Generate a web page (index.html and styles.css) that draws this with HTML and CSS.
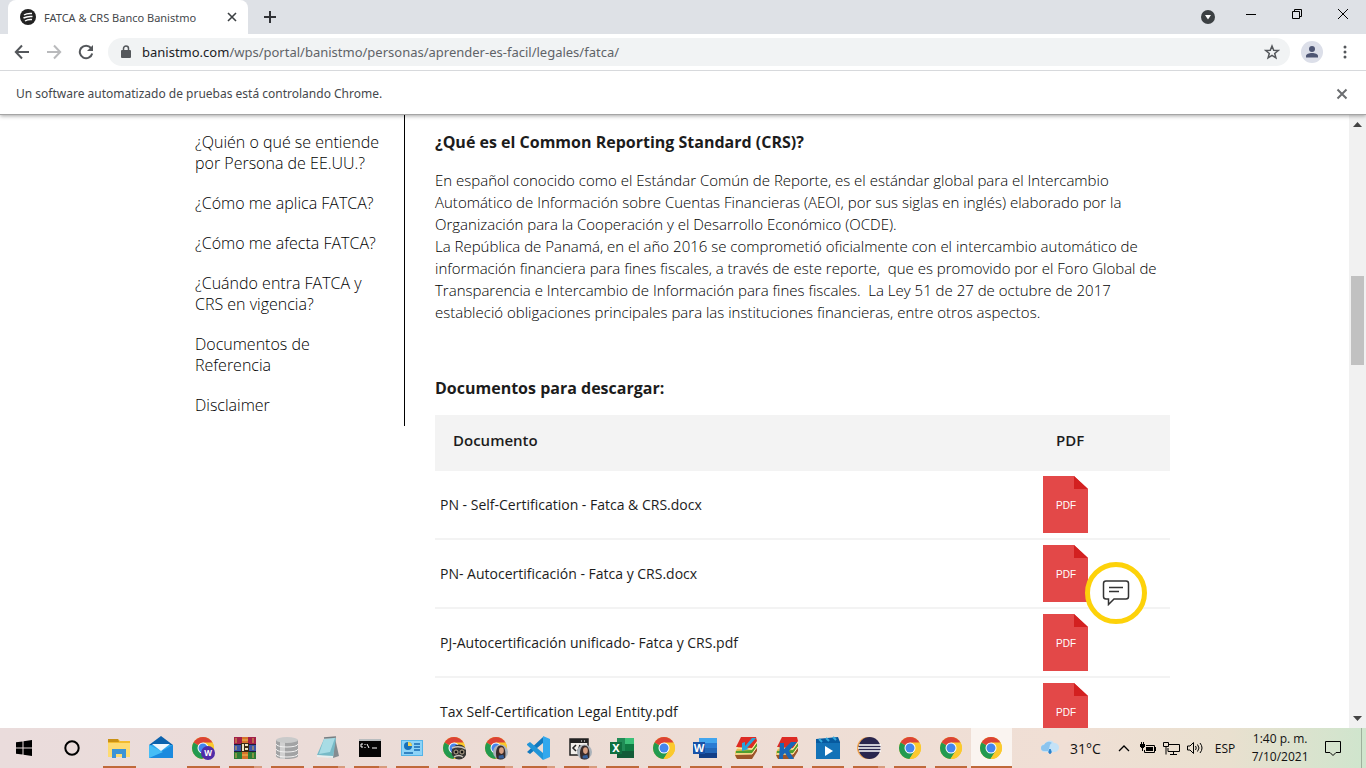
FILE: index.html
```html
<!DOCTYPE html>
<html lang="es">
<head>
<meta charset="utf-8">
<title>FATCA &amp; CRS Banco Banistmo</title>
<link rel="stylesheet" href="styles.css">
</head>
<body>
<svg class="defs" aria-hidden="true">
  <symbol id="chrome" viewBox="0 0 24 24">
    <circle cx="12" cy="12" r="11" fill="#fbc92d"/>
    <path d="M12 12 2.500 6.500A11 11 0 0 1 21.500 6.500z" fill="#dc4335"/>
    <path d="M2.500 6.500A11 11 0 0 0 11.500 23L16.800 14.800 12 12z" fill="#229a50"/>
    <path d="M12 6.500h9.500A11 11 0 0 1 11.500 23l5.300-8.300z" fill="#fbc92d"/>
    <circle cx="12" cy="12" r="5.500" fill="#fff"/>
    <circle cx="12" cy="12" r="4.500" fill="#4486ee"/>
  </symbol>
  <symbol id="face" viewBox="0 0 16 16">
    <circle cx="8" cy="8" r="8" fill="#aab2ba"/>
    <path d="M4 15C2 8 4 1 8 1s6 5 5 13a8 8 0 0 1-9 1z" fill="#382b2a"/>
    <ellipse cx="9" cy="6.500" rx="2.500" ry="3.500" fill="#d9a184"/>
    <path d="M6 12l5-1 1 4H6z" fill="#35609b"/>
  </symbol>
  <symbol id="pdf" viewBox="0 0 45 57">
    <path d="M0 0h31l14 13v44H0z" fill="#e34848"/>
    <path d="M31 0l14 13H31z" fill="#d32020"/>
    <text x="23" y="33" text-anchor="middle" class="pdf-label">PDF</text>
  </symbol>
  <symbol id="books" viewBox="0 0 24 24">
    <path d="M1 16 6 8l17-2v8l-5 8H2z" fill="#e9be54"/>
    <path d="M1 19l17-1 5-7v4l-5 8H3z" fill="#9c552a"/>
    <path d="M2 15l16-1 5-7v3l-5 7H2z" fill="#4f9f30"/>
    <path d="M2 11 7 1h15l1 4-5 7z" fill="#dd2b24"/>
    <path d="M2 12l16 1 5-7M2 18h16l5-7" fill="none" stroke="#fff0b4"/>
  </symbol>
</svg>

<header class="browser">
  <div class="tabstrip">
    <div class="tab">
      <svg class="favicon" viewBox="0 0 16 16"><circle cx="8" cy="8" r="8" fill="#222"/><path d="M4 6q3-2 8-1.500M3.500 9q4-2 9-1.500M5 12q3-2 7-1.500" fill="none" stroke="#fff" stroke-width="1.500"/></svg>
      <span class="tab-title">FATCA &amp; CRS Banco Banistmo</span>
      <button class="icon-btn tab-close" aria-label="Cerrar pestaña"><svg width="10" height="10" viewBox="0 0 10 10"><path d="M1 1l8 8M9 1 1 9" stroke="#3c4043" stroke-width="1.600"/></svg></button>
    </div>
    <button class="icon-btn new-tab" aria-label="Nueva pestaña"><svg width="14" height="14" viewBox="0 0 14 14"><path d="M7 1v12M1 7h12" stroke="#303236" stroke-width="2"/></svg></button>
    <button class="icon-btn tab-search" aria-label="Buscar pestañas"><svg width="14" height="14" viewBox="0 0 14 14"><circle cx="7" cy="7" r="7" fill="#3c4043"/><path d="M4 5h6l-3 4.500z" fill="#fff"/></svg></button>
    <div class="window-controls">
      <button class="icon-btn" aria-label="Minimizar"><svg width="12" height="12" viewBox="0 0 12 12"><path d="M1 6.500h10" stroke="#000"/></svg></button>
      <button class="icon-btn" aria-label="Restaurar"><svg width="12" height="12" viewBox="0 0 12 12"><path d="M1.500 3.500h7v7h-7zM3.500 3V1.500h7v7H9" fill="none" stroke="#000"/></svg></button>
      <button class="icon-btn" aria-label="Cerrar"><svg width="12" height="12" viewBox="0 0 12 12"><path d="M1 1l10 10M11 1 1 11" stroke="#000"/></svg></button>
    </div>
  </div>
  <div class="toolbar">
    <button class="icon-btn nav" aria-label="Atrás"><svg width="16" height="16" viewBox="0 0 16 16"><path d="M15 8H2M8 1.500 1.800 8 8 14.500" fill="none" stroke="#54575b" stroke-width="2"/></svg></button>
    <button class="icon-btn nav" aria-label="Adelante"><svg width="16" height="16" viewBox="0 0 16 16"><path d="M1 8h13M8 1.500 14.200 8 8 14.500" fill="none" stroke="#b9babc" stroke-width="2"/></svg></button>
    <button class="icon-btn nav" aria-label="Volver a cargar"><svg width="16" height="16" viewBox="0 0 16 16"><path d="M13 4A6.300 6.300 0 1 0 14.200 9.500" fill="none" stroke="#54575b" stroke-width="2"/><path d="M15 1v6H9z" fill="#54575b"/></svg></button>
    <div class="omnibox">
      <svg width="10" height="14" viewBox="0 0 10 14"><path d="M2.500 6V3.500a2.500 2.500 0 0 1 5 0V6" fill="none" stroke="#54575b" stroke-width="1.500"/><rect y="5" width="10" height="8" rx="1" fill="#54575b"/></svg>
      <a class="url" href="#"><span class="host">banistmo.com</span>/wps/portal/banistmo/personas/aprender-es-facil/legales/fatca/</a>
      <button class="icon-btn" aria-label="Añadir a marcadores"><svg width="16" height="16" viewBox="0 0 16 16"><path d="M8 2l1.700 4.200 4.500.3-3.500 2.900 1.200 4.500L8 11.400l-3.900 2.500 1.200-4.500L1.800 6.500l4.500-.3z" fill="none" stroke="#54575b" stroke-width="1.500"/></svg></button>
    </div>
    <button class="icon-btn avatar" aria-label="Perfil"><svg width="22" height="22" viewBox="0 0 22 22"><circle cx="11" cy="11" r="11" fill="#dcdfe9"/><circle cx="11" cy="8" r="3" fill="#4d5573"/><path d="M5 16.500V15c0-2 3-3 6-3s6 1 6 3v1.500z" fill="#4d5573"/></svg></button>
    <button class="icon-btn menu" aria-label="Menú"><svg width="4" height="14" viewBox="0 0 4 14" fill="#54575b"><circle cx="2" cy="2" r="1.500"/><circle cx="2" cy="7" r="1.500"/><circle cx="2" cy="12" r="1.500"/></svg></button>
  </div>
  <div class="infobar">
    <span>Un software automatizado de pruebas está controlando Chrome.</span>
    <button class="icon-btn" aria-label="Cerrar aviso"><svg width="12" height="12" viewBox="0 0 12 12"><path d="M1.500 1.500l9 9M10.500 1.500l-9 9" stroke="#6b6d70" stroke-width="2"/></svg></button>
  </div>
</header>

<div class="viewport">
  <div class="page">
    <div class="container">
      <nav class="side">
        <a href="#">¿Quién o qué se entiende por Persona de EE.UU.?</a>
        <a href="#">¿Cómo me aplica FATCA?</a>
        <a href="#">¿Cómo me afecta FATCA?</a>
        <a href="#">¿Cuándo entra FATCA y CRS en vigencia?</a>
        <a href="#">Documentos de Referencia</a>
        <a href="#">Disclaimer</a>
      </nav>
      <main class="content">
        <h2>¿Qué es el Common Reporting Standard (CRS)?</h2>
        <p>En español conocido como el Estándar Común de Reporte, es el estándar global para el Intercambio Automático de Información sobre Cuentas Financieras (AEOI, por sus siglas en inglés) elaborado por la Organización para la Cooperación y el Desarrollo Económico (OCDE).<br>La República de Panamá, en el año 2016 se comprometió oficialmente con el intercambio automático de información financiera para fines fiscales, a través de este reporte,&nbsp; que es promovido por el Foro Global de Transparencia e Intercambio de Información para fines fiscales.&nbsp; La Ley 51 de 27 de octubre de 2017 estableció obligaciones principales para las instituciones financieras, entre otros aspectos.</p>
        <h2>Documentos para descargar:</h2>
        <table class="docs">
          <thead><tr><th>Documento</th><th class="col-pdf">PDF</th></tr></thead>
          <tbody>
            <tr><td>PN - Self-Certification - Fatca &amp; CRS.docx</td><td><a href="#" aria-label="Descargar"><svg class="pdf"><use href="#pdf"/></svg></a></td></tr>
            <tr><td>PN- Autocertificación - Fatca y CRS.docx</td><td><a href="#" aria-label="Descargar"><svg class="pdf"><use href="#pdf"/></svg></a></td></tr>
            <tr><td>PJ-Autocertificación unificado- Fatca y CRS.pdf</td><td><a href="#" aria-label="Descargar"><svg class="pdf"><use href="#pdf"/></svg></a></td></tr>
            <tr><td>Tax Self-Certification Legal Entity.pdf</td><td><a href="#" aria-label="Descargar"><svg class="pdf"><use href="#pdf"/></svg></a></td></tr>
          </tbody>
        </table>
      </main>
    </div>
    <button class="chat" aria-label="Chat"><svg width="28" height="26" viewBox="0 0 28 26" fill="none" stroke="#333" stroke-width="1.500"><path d="M4 1h20q2.500 0 2.500 2.500v13q0 2.500-2.500 2.500H12l-5.500 5.500V19H4q-2.500 0-2.500-2.500v-13Q1.500 1 4 1z"/><path d="M7 7.500h14M7 11.500h10"/></svg></button>
  </div>
  <div class="scrollbar">
    <svg width="9" height="5" viewBox="0 0 9 5"><path d="M0 5l4.500-5L9 5z" fill="#444"/></svg>
    <div class="track"><div class="thumb"></div></div>
    <svg width="9" height="5" viewBox="0 0 9 5"><path d="M0 0h9L4.500 5z" fill="#444"/></svg>
  </div>
</div>

<footer class="taskbar">
  <button class="task-btn" aria-label="Inicio"><svg width="16" height="16" viewBox="0 0 16 16"><path d="M0 2.300 6.500 1.400v6.100H0zM7.500 1.200 16 0v7.500H7.500zM0 8.500h6.500v6.100L0 13.700zM7.500 8.500H16V16l-8.500-1.200z"/></svg></button>
  <button class="task-btn" aria-label="Cortana"><svg width="16" height="16" viewBox="0 0 16 16"><circle cx="8" cy="8" r="6.700" fill="none" stroke="#000" stroke-width="2"/></svg></button>
  <div class="apps">
    <button class="app open" aria-label="Explorador"><svg viewBox="0 0 24 24"><path d="M1 3h10l2 2h10v15H1z" fill="#f3bb2e"/><path d="M1 3h10l1 3H1z" fill="#c99014"/><path d="M1 7h22v14H1z" fill="#fedb72"/><path d="M5 13h14v9h-4v-4H9v4H5z" fill="#3b93d6"/></svg></button>
    <button class="app" aria-label="Correo"><svg viewBox="0 0 24 24"><path d="M0 9 12 0l12 9z" fill="#0b62ad"/><path d="M0 9h24v13H0z" fill="#2da8ee"/><path d="M0 22l24-13v13z" fill="#1b8ade"/><path d="M0 9v13l14-6z" fill="#46bdf6"/><path d="M3 8h18L12 15z" fill="#eef7fd"/></svg></button>
    <button class="app open" aria-label="Chrome W"><svg viewBox="0 0 24 24"><use href="#chrome"/><circle cx="17" cy="17" r="7" fill="#512da8"/><text x="17" y="20" text-anchor="middle" class="badge-text">W</text></svg></button>
    <button class="app open multi" aria-label="WinRAR"><svg viewBox="0 0 24 24"><path d="M1 1h22v8H1z" fill="#a32049"/><path d="M1 9h22v7H1z" fill="#3c54a8"/><path d="M1 16h22v7H1z" fill="#2c7d38"/><path d="M1 8.500h22M1 15.500h22" stroke="#211b39"/><path d="M3 2v5M20 2v5M3 10v4M20 10v4M3 17v5M20 17v5" stroke="#d7ad4c"/><path d="M9 1h6v22H9z" fill="#d6742b"/><path d="M8 7h8v9H8z" fill="#3a2a16"/><path d="M9 8h2v7H9zM12 8h3v2h-3zM12 12h3v2h-3z" fill="#f0e5c3"/><path d="M9 4h6M9 19h6" stroke="#edc355"/></svg></button>
    <button class="app open" aria-label="Base de datos"><svg viewBox="0 0 24 24"><path d="M1 4v16c0 4 22 4 22 0V4z" fill="#a2a3a4"/><path d="M5 6v17h5V6z" fill="#d0d0d0"/><path d="M1 8c0 4 22 4 22 0M1 13c0 4 22 4 22 0M1 18c0 4 22 4 22 0" fill="none" stroke="#f1f1f1"/><ellipse cx="12" cy="4" rx="11" ry="3" fill="#c9caca"/></svg></button>
    <button class="app open multi" aria-label="Bloc de notas"><svg viewBox="0 0 24 24"><path d="M19 2l4 18-6 2z" fill="#858c90"/><path d="M8 3l12-1-3 20-16-3z" fill="#77bac7"/><path d="M8 3l11-1-5 14-11 2z" fill="#a8dce5"/><path d="M1 19l16 1v2L1 21z" fill="#e8eeee"/><path d="M8 2l12-1" stroke="#767e82" stroke-width="1.500"/></svg></button>
    <button class="app open multi" aria-label="Símbolo del sistema"><svg viewBox="0 0 24 24"><path d="M1 3h22v18H1z" fill="#050505"/><path d="M1 3h22v2H1z" fill="#b9bdbf"/><path d="M5 8H3v3h2M7 8v1M7 11v1M9 8l2 4M14 12h5" fill="none" stroke="#fff"/></svg></button>
    <button class="app open" aria-label="Panel de control"><svg viewBox="0 0 24 24"><path d="M1 4h22v16H1z" fill="#54b4e8"/><path d="M2 5h20v14H2z" fill="#8dd3f7"/><circle cx="8" cy="10" r="4" fill="#176fb9"/><path d="M8 10V6a4 4 0 0 1 4 4z" fill="#f3d252"/><path d="M14 8h6M14 11h6M14 14h6M4 17h9" stroke="#166ab1" stroke-width="1.500"/></svg></button>
    <button class="app open" aria-label="Chrome perfil"><svg viewBox="0 0 24 24"><use href="#chrome"/><circle cx="17" cy="16" r="7.500" fill="#383735"/><path d="M10 12q7-3 14 1M12 21q5-3 9 0" fill="none" stroke="#c9c4bc" stroke-width="1.500"/><circle cx="14" cy="16" r="2" fill="#111" stroke="#b7a990"/><circle cx="20" cy="16" r="2" fill="#111" stroke="#b7a990"/></svg></button>
    <button class="app open multi" aria-label="Chrome personal"><svg viewBox="0 0 24 24"><use href="#chrome"/><use href="#face" x="9" y="8" width="15" height="16"/></svg></button>
    <button class="app open multi" aria-label="Visual Studio Code"><svg viewBox="0 0 24 24"><path d="M17 0v7L4 18l-3-2L17 1z" fill="#1279be"/><path d="M1 8l3-2 13 11v7L1 9z" fill="#2195d7"/><path d="M17 0l7 3v18l-7 3z" fill="#32a8ed"/></svg></button>
    <button class="app open multi" aria-label="Herramientas"><svg viewBox="0 0 24 24"><path d="M2 3h18v16H2z" fill="#f1eeea" stroke="#222" stroke-width="1.500"/><path d="M2 3h18v4H2z" fill="#222"/><path d="M13 5h1M16 5h1" stroke="#fff"/><path d="M8 9l-3 3 3 3M12 9l-2 6" fill="none" stroke="#222" stroke-width="1.500"/><use href="#face" x="9" y="8" width="15" height="16"/></svg></button>
    <button class="app open" aria-label="Excel"><svg viewBox="0 0 24 24"><path d="M7 2h17v20H7z" fill="#218c57"/><path d="M15 2h9v6h-9z" fill="#3bc078"/><path d="M7 15h17v7H7z" fill="#135c38"/><path d="M15 8h9v7h-9z" fill="#107b43"/><path d="M0 6h12v12H0z" fill="#107140"/><text x="6" y="16" text-anchor="middle" class="office-text">X</text></svg></button>
    <button class="app open" aria-label="Chrome"><svg><use href="#chrome"/></svg></button>
    <button class="app open" aria-label="Word"><svg viewBox="0 0 24 24"><path d="M6 2h18v20H6z" fill="#2367b8"/><path d="M6 2h18v5H6z" fill="#42a5ee"/><path d="M6 7h18v5H6z" fill="#2b7cd3"/><path d="M6 17h18v5H6z" fill="#123f87"/><path d="M0 6h12v12H0z" fill="#1852a7"/><text x="6" y="16" text-anchor="middle" class="office-text">W</text></svg></button>
    <button class="app open" aria-label="Libros"><svg viewBox="0 0 24 24"><use href="#books"/><path d="M18 2 11 10V6L8 7v8l7-2-2-1 9-10z" fill="#27a3da"/></svg></button>
    <button class="app open" aria-label="Biblioteca"><svg viewBox="0 0 24 24"><use href="#books"/><path d="M5 7h4v6l7-7h6l-8 9 5 8h-5l-4-6-2 2v4H4z" fill="#1a67b7"/></svg></button>
    <button class="app open" aria-label="Películas"><svg viewBox="0 0 24 24"><path d="M0 3l22-2 2 5v17H0z" fill="#075a9f"/><path d="M3 3l3 3M10 2l3 3M17 1l3 3" stroke="#35aadd" stroke-width="2"/><path d="M0 7h24v16H0z" fill="#1372b7"/><path d="M9 10v10l8-5z" fill="#fff"/></svg></button>
    <button class="app open multi" aria-label="Eclipse"><svg viewBox="0 0 24 24"><circle cx="11" cy="12" r="11" fill="#f0a451"/><circle cx="12.500" cy="12" r="11" fill="#29264e"/><path d="M2 9h22M1 12h23M2 15h22" stroke="#fff" stroke-width="1.300"/></svg></button>
    <button class="app open" aria-label="Chrome 2"><svg><use href="#chrome"/></svg></button>
    <button class="app open" aria-label="Chrome 3"><svg><use href="#chrome"/></svg></button>
    <button class="app open active" aria-label="Chrome 4"><svg><use href="#chrome"/></svg></button>
  </div>
  <div class="tray">
    <svg width="20" height="18" viewBox="0 0 20 18"><path d="M5 13a4 4 0 0 1 0-8 5 5 0 0 1 9-1 4.500 4.500 0 1 1 1 9z" fill="#c4e2f7"/><path d="M4 12a3 3 0 0 1 0-6 5 5 0 0 1 8-2c-3 1-2 5-4 8z" fill="#8cc4ee"/><path d="M10 10c-4 6 4 6 0 0z" fill="#2982ce" stroke="#2982ce"/></svg>
    <span class="temp">31°C</span>
    <svg class="chevron" width="12" height="8" viewBox="0 0 12 8"><path d="M1 7l5-5 5 5" fill="none" stroke="#000" stroke-width="1.300"/></svg>
    <svg width="16" height="14" viewBox="0 0 16 14"><path d="M6 4.500h8.500v7h-10V9" fill="none" stroke="#000"/><path d="M6 6h7v4H6zM15 6h1v4h-1zM0 3h5v3H4v1H1V6H0z"/><path d="M1.500 1v2M3.500 1v2M2.500 7v3" stroke="#000"/></svg>
    <svg width="17" height="14" viewBox="0 0 17 14"><path d="M6 3.500h10.500v7H5V7M.5 1.500h5v4h-5zM3 6v7.500M7 13.500h7M10.500 11v2" fill="none" stroke="#000"/></svg>
    <svg width="17" height="14" viewBox="0 0 17 14"><path d="M.5 5v4H3l3.500 3.500v-11L3 5zM8.500 5q1.500 2 0 4M10.500 3.500q3 3.500 0 7M13 2q4 5 0 10" fill="none" stroke="#000"/></svg>
    <span class="lang">ESP</span>
    <time class="clock">1:40 p. m.<br>7/10/2021</time>
    <svg class="notices" width="17" height="17" viewBox="0 0 17 17"><path d="M.5 1.500h15v11H11L8 15.500l-3-3H.5z" fill="none" stroke="#000"/></svg>
  </div>
  <button class="show-desktop" aria-label="Mostrar escritorio"></button>
</footer>
</body>
</html>
```
FILE: styles.css
```css
* { box-sizing: border-box; }
body {
  margin: 0;
  height: 100vh;
  display: flex;
  flex-direction: column;
  overflow: hidden;
  background: #fff;
  color: #1c1c1c;
  font-family: "Open Sans", "Noto Sans", sans-serif;
}
button { font: inherit; color: inherit; border: 0; padding: 0; background: none; }
a { color: inherit; text-decoration: none; }
svg { display: block; flex: none; }
.defs { position: absolute; width: 0; height: 0; }
.icon-btn { display: flex; align-items: center; justify-content: center; flex: none; }

.browser {
  position: relative;
  z-index: 2;
  background: #fff;
  border-bottom: 1px solid #a5a5a5;
  box-shadow: 0 1px 4px rgba(0, 0, 0, .35);
}
.tabstrip { display: flex; height: 34px; padding-left: 8px; background: #dee1e6; }
.tab {
  display: flex;
  align-items: center;
  width: 240px;
  padding: 0 10px 0 12px;
  background: #fff;
  border-radius: 8px 8px 0 0;
}
.favicon { width: 16px; height: 16px; }
.tab-title {
  flex: 1;
  margin-left: 8px;
  font-family: "Noto Sans", sans-serif;
  font-size: 11px;
  white-space: nowrap;
  color: #45484c;
}
.tab-close { width: 12px; }
.new-tab { width: 44px; }
.tab-search { width: 40px; margin-left: auto; }
.window-controls { display: flex; }
.window-controls .icon-btn { width: 46px; height: 28px; }
.toolbar {
  display: flex;
  align-items: center;
  height: 37px;
  padding: 0 11px 0 6px;
  border-bottom: 1px solid #d7d9dc;
}
.nav { width: 32px; }
.omnibox {
  display: flex;
  align-items: center;
  flex: 1;
  height: 28px;
  margin-left: 6px;
  padding: 0 10px 0 13px;
  border-radius: 14px;
  background: #f1f3f4;
  font-family: "Noto Sans", sans-serif;
  font-size: 13px;
}
.url { flex: 1; margin-left: 11px; color: #5f6368; white-space: nowrap; }
.host { color: #202124; }
.avatar { margin-left: 11px; }
.menu { width: 20px; margin-left: 12px; }
.infobar {
  display: flex;
  align-items: center;
  justify-content: space-between;
  height: 43px;
  padding: 2px 18px 0 16px;
  font-family: "Noto Sans", sans-serif;
  font-size: 12px;
  color: #45484c;
}

.viewport { display: flex; flex: 1; min-height: 0; }
.page { position: relative; flex: 1; overflow: hidden; }
.container {
  display: grid;
  grid-template-columns: 210px 1fr;
  align-items: start;
  gap: 30px;
  max-width: 1169px;
  margin: 0 auto;
  padding: 0 89px 0 105px;
}
.side {
  display: flex;
  flex-direction: column;
  gap: 19px;
  padding: 17px 20px 10px 0;
  border-right: 1px solid #000;
  font-size: 16px;
  font-weight: 300;
  line-height: 21px;
  color: #000;
}
.content h2 { margin: 0; padding-top: 16px; font-size: 16px; font-weight: 700; line-height: 22px; }
.content p { margin: 16px 0 38px; font-size: 15px; font-weight: 300; line-height: 22px; color: #000; }
.docs { width: 100%; margin-top: 16px; border-collapse: collapse; table-layout: fixed; }
.docs th {
  height: 56px;
  padding: 0 18px 6px;
  background: #f3f3f3;
  font-size: 15px;
  font-weight: 600;
  text-align: left;
}
.docs .col-pdf { width: 132px; }
.docs td { padding: 5px; border-bottom: 2px solid #f3f3f3; font-size: 14px; font-weight: 500; }
.pdf { width: 45px; height: 57px; }
.pdf-label { font: 10px "Liberation Sans", sans-serif; fill: #fff; }
.chat {
  position: absolute;
  right: 202px;
  bottom: 104px;
  display: flex;
  align-items: center;
  justify-content: center;
  width: 62px;
  height: 62px;
  border: 5px solid #fdd20a;
  border-radius: 50%;
  background: #fff;
}
.scrollbar {
  display: flex;
  flex-direction: column;
  align-items: center;
  width: 17px;
  padding: 7px 0;
  background: #f1f1f1;
}
.track { flex: 1; width: 13px; padding-top: 149px; }
.thumb { height: 89px; background: #c1c1c1; }

.taskbar {
  display: flex;
  height: 40px;
  background: linear-gradient(90deg, #eadcdc, #ecdcd5 40%, #f0dfd5 78%, #e9e0cf 90%, #cfe5cd);
  color: #111;
}
.task-btn { display: flex; align-items: center; justify-content: center; width: 48px; }
.apps { display: flex; flex: 1; margin-left: 2px; }
.app {
  position: relative;
  display: flex;
  flex: 1 1 42px;
  align-items: center;
  justify-content: center;
}
.app:nth-child(n+15) { flex-basis: 41px; }
.app svg { width: 24px; height: 24px; }
.open::after {
  content: "";
  position: absolute;
  left: 5px;
  right: 4px;
  bottom: 0;
  height: 2px;
  background: #c0693a;
}
.multi::after { background: linear-gradient(90deg, #c0693a 77%, #d89b7c 77%); }
.active { background: #faf4f0; }
.active::after { left: 0; right: 0; }
.badge-text { font: bold 8px "Noto Sans", sans-serif; fill: #fff; }
.office-text { font: bold 11px "Noto Sans", sans-serif; fill: #fff; }
.tray {
  display: flex;
  align-items: center;
  width: 349px;
  gap: 7px;
  padding-left: 28px;
  font-size: 12px;
}
.temp { margin-left: 3px; font-size: 14px; }
.chevron { margin: 0 3px 0 10px; }
.lang { margin-left: 4px; }
.clock { flex: 1; line-height: 18px; text-align: center; }
.notices { margin-right: 19px; }
.show-desktop { width: 5px; border-left: 1px solid #9fb09d; }
```
